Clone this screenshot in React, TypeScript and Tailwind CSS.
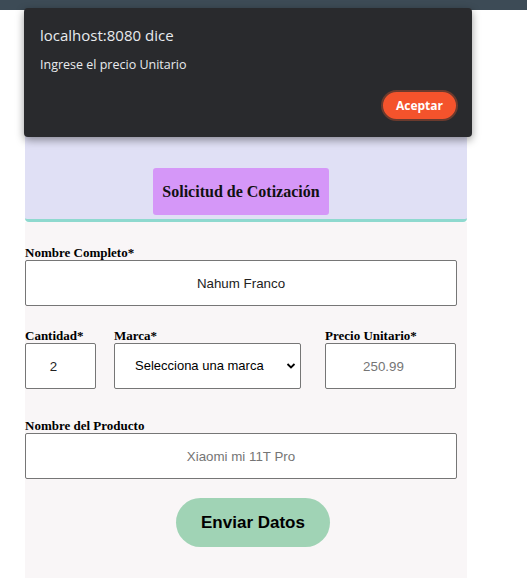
import React from 'react';

const serif = { fontFamily: '"Liberation Serif", "Times New Roman", serif' };

function Label({ children }: { children: React.ReactNode }) {
  return (
    <label className="block text-[13px] font-bold leading-[15px] text-black" style={serif}>
      {children}
    </label>
  );
}

export default function App() {
  const inputCls =
    "h-[46px] w-full rounded-[2px] border border-[#767676] bg-white text-center text-[13.33px] text-[#222] placeholder:text-[#757575] outline-none";

  return (
    <div className="relative min-h-[578px] w-[527px] overflow-hidden bg-white" style={{ fontFamily: '"Liberation Sans", Arial, sans-serif' }}>
      <div className="h-[10px] w-full bg-[#3d4b56]" />

      <div className="ml-[25px] w-[442px]">
        <div className="flex h-[212px] items-end rounded-b-[4px] border-b-[3px] border-[#8fd9cf] bg-[#e0e0f5] pb-[4px] pl-[128px]">
          <div className="flex h-[47px] w-[176px] items-center justify-center rounded-[3px] bg-[#d597f8]">
            <h1 className="text-[16px] font-bold text-[#111]" style={serif}>Solicitud de Cotización</h1>
          </div>
        </div>

        <form className="h-[356px] bg-[#f9f6f7] pt-[23px]">
          <Label>Nombre Completo*</Label>
          <input className={`${inputCls} !w-[432px]`} defaultValue="Nahum Franco" />

          <div className="mt-[22px] flex">
            <div className="w-[71px]">
              <Label>Cantidad*</Label>
              <input className={`${inputCls} pr-[14px]`} defaultValue="2" />
            </div>
            <div className="ml-[18px] w-[187px]">
              <Label>Marca*</Label>
              <div className="relative">
                <select className="h-[46px] w-full appearance-none rounded-[2px] border border-[#767676] bg-white pl-[20px] text-[13px] text-black outline-none">
                  <option>Selecciona una marca</option>
                </select>
                <svg className="pointer-events-none absolute right-[5px] top-[19px]" width="10" height="8" viewBox="0 0 10 8">
                  <path d="M1.5 2 L5 5.5 L8.5 2" fill="none" stroke="#000" strokeWidth="1.8" />
                </svg>
              </div>
            </div>
            <div className="ml-[24px] w-[131px]">
              <Label>Precio Unitario*</Label>
              <input className={`${inputCls} pr-[14px]`} placeholder="250.99" />
            </div>
          </div>

          <div className="mt-[29px]">
            <Label>Nombre del Producto</Label>
            <input className={`${inputCls} !w-[432px]`} placeholder="Xiaomi mi 11T Pro" />
          </div>

          <div className="mt-[19px] flex pl-[151px]">
            <button type="button" className="h-[49px] w-[154px] rounded-full bg-[#a0d3b5] text-[17px] font-bold text-black">
              Enviar Datos
            </button>
          </div>
        </form>
      </div>

      <div
        className="absolute left-[24px] top-[8px] h-[129px] w-[448px] rounded-[4px] bg-[#292a2d] shadow-[0_3px_8px_rgba(0,0,0,0.4)]"
        style={{ fontFamily: '"Open Sans", "Noto Sans", sans-serif' }}
      >
        <div className="px-[16px] pt-[17px]">
          <div className="text-[15px] leading-[20px] text-[#e8eaed]">localhost:8080 dice</div>
          <div className="mt-[12px] text-[12.5px] leading-[16px] text-[#e8eaed]">Ingrese el precio Unitario</div>
        </div>
        <div className="absolute right-[14px] top-[82px]">
          <button className="h-[31px] rounded-full border-[2px] border-[#6b3a2d] bg-[#f4532c] px-[13px] text-[12px] font-bold text-white">
            Aceptar
          </button>
        </div>
      </div>
    </div>
  );
}
